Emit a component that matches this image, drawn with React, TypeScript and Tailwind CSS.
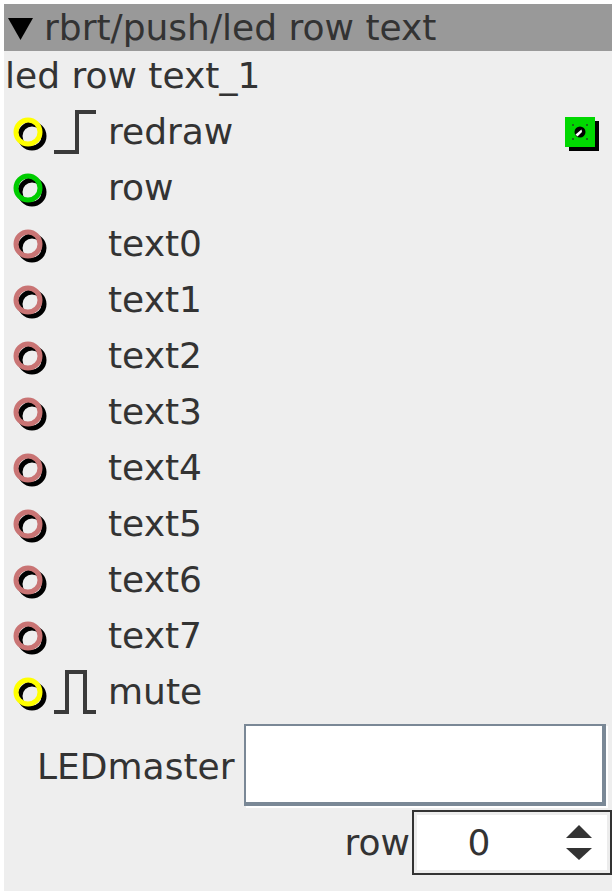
import React from 'react';

type Kind = 'bool' | 'int' | 'str';
type Edge = 'rise' | 'pulse' | null;

const ringColor: Record<Kind, string> = { bool: '#ffff00', int: '#00cc00', str: '#c97474' };

const inlets: { name: string; kind: Kind; edge: Edge }[] = [
  { name: 'redraw', kind: 'bool', edge: 'rise' },
  { name: 'row', kind: 'int', edge: null },
  ...Array.from({ length: 8 }, (_, i) => ({ name: 'text' + i, kind: 'str' as Kind, edge: null as Edge })),
  { name: 'mute', kind: 'bool', edge: 'pulse' },
];

function PinIcon({ kind, edge }: { kind: Kind; edge: Edge }) {
  return (
    <svg width="90" height="56" viewBox="0 0 90 56" className="shrink-0">
      <circle cx="22" cy="32" r="12" fill="none" stroke="#000" strokeWidth="5" />
      <circle cx="18" cy="28" r="12" fill="none" stroke={ringColor[kind]} strokeWidth="5" />
      {edge === 'rise' && <polyline points="44,48 67,48 67,8 86,8" fill="none" stroke="#3a3a3a" strokeWidth="4" />}
      {edge === 'pulse' && <polyline points="44,48 57,48 57,8 75,8 75,48 86,48" fill="none" stroke="#3a3a3a" strokeWidth="4" />}
    </svg>
  );
}

function LedIndicator() {
  return (
    <svg width="34" height="34" viewBox="0 0 34 34" className="shrink-0">
      <rect x="4" y="4" width="30" height="30" fill="#000" />
      <rect x="0" y="0" width="30" height="30" fill="#00d800" />
      <g fill="#1b6b1b">
        <rect x="7" y="7" width="2" height="2" />
        <rect x="21" y="7" width="2" height="2" />
        <rect x="7" y="21" width="2" height="2" />
        <rect x="21" y="21" width="2" height="2" />
      </g>
      <circle cx="15" cy="15" r="5.5" fill="#000" />
      <path d="M10.5 17.5 L16.5 12.5 L17 15 L12.5 19.5 Z" fill="#fff" />
    </svg>
  );
}

export default function App() {
  return (
    <div className="bg-white p-[4px] w-[616px] h-[896px]" style={{ fontFamily: '"DejaVu Sans", Verdana, sans-serif' }}>
      <div className="bg-[#eeeeee] w-[608px] h-[887px] text-[#333333] text-[36px] flex flex-col">
        <div className="bg-[#999999] h-[47px] leading-[47px] flex items-center">
          <svg width="25" height="22" viewBox="0 0 25 22" className="ml-[4px] mt-[2px] shrink-0">
            <polygon points="0,0 25,0 12.5,22" fill="#000" />
          </svg>
          <span className="ml-[11px] whitespace-nowrap">rbrt/push/led row text</span>
        </div>
        <div className="leading-[49px] pl-[1px] whitespace-nowrap">led row text_1</div>
        <div className="mt-[4px] flex flex-col">
          {inlets.map(p => (
            <div key={p.name} className="h-[56px] flex items-start">
              <div className="ml-[6px]"><PinIcon kind={p.kind} edge={p.edge} /></div>
              <span className="ml-[8px] leading-[56px] whitespace-nowrap">{p.name}</span>
              {p.name === 'redraw' && <div className="ml-auto mr-[13px] mt-[13px]"><LedIndicator /></div>}
            </div>
          ))}
        </div>
        <div className="flex items-center mt-[4px] pl-[33px]">
          <span className="leading-[42px] pt-[3px] whitespace-nowrap">LEDmaster</span>
          <div className="ml-[10px] w-[362px] h-[82px] bg-white border-t-2 border-l-2 border-r-4 border-b-4 border-[#7a8896] shadow-[2px_2px_0_#ffffff]" />
        </div>
        <div className="flex items-center justify-end mt-[4px]">
          <span className="leading-[42px] mr-[2px] whitespace-nowrap">row</span>
          <div className="w-[200px] h-[65px] border-2 border-[#333333] bg-white">
            <div className="h-full border-[3px] border-[#ececec] flex items-center">
              <span className="ml-[50px] w-[24px] text-center leading-[42px]">0</span>
              <svg width="26" height="36" viewBox="0 0 26 36" className="ml-auto mr-[15px]">
                <polygon points="13,0 26,13 0,13" fill="#333333" />
                <polygon points="0,23 26,23 13,35" fill="#333333" />
              </svg>
            </div>
          </div>
        </div>
      </div>
    </div>
  );
}
